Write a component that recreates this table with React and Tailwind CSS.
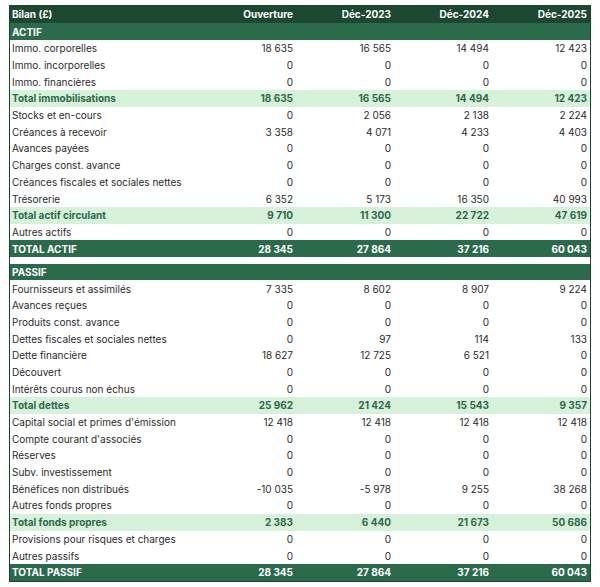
import React from "react";

const Z = ["0", "0", "0", "0"];
const actif = [
  { l: "Immo. corporelles", v: ["18 635", "16 565", "14 494", "12 423"] },
  { l: "Immo. incorporelles", v: Z },
  { l: "Immo. financières", v: Z },
  { l: "Total immobilisations", v: ["18 635", "16 565", "14 494", "12 423"], t: "sub" },
  { l: "Stocks et en-cours", v: ["0", "2 056", "2 138", "2 224"] },
  { l: "Créances à recevoir", v: ["3 358", "4 071", "4 233", "4 403"] },
  { l: "Avances payées", v: Z },
  { l: "Charges const. avance", v: Z },
  { l: "Créances fiscales et sociales nettes", v: Z },
  { l: "Trésorerie", v: ["6 352", "5 173", "16 350", "40 993"] },
  { l: "Total actif circulant", v: ["9 710", "11 300", "22 722", "47 619"], t: "sub" },
  { l: "Autres actifs", v: Z },
  { l: "TOTAL ACTIF", v: ["28 345", "27 864", "37 216", "60 043"], t: "grand" },
];
const passif = [
  { l: "Fournisseurs et assimilés", v: ["7 335", "8 602", "8 907", "9 224"] },
  { l: "Avances reçues", v: Z },
  { l: "Produits const. avance", v: Z },
  { l: "Dettes fiscales et sociales nettes", v: ["0", "97", "114", "133"] },
  { l: "Dette financière", v: ["18 627", "12 725", "6 521", "0"] },
  { l: "Découvert", v: Z },
  { l: "Intérêts courus non échus", v: Z },
  { l: "Total dettes", v: ["25 962", "21 424", "15 543", "9 357"], t: "sub" },
  { l: "Capital social et primes d'émission", v: ["12 418", "12 418", "12 418", "12 418"] },
  { l: "Compte courant d'associés", v: Z },
  { l: "Réserves", v: Z },
  { l: "Subv. investissement", v: Z },
  { l: "Bénéfices non distribués", v: ["-10 035", "-5 978", "9 255", "38 268"] },
  { l: "Autres fonds propres", v: Z },
  { l: "Total fonds propres", v: ["2 383", "6 440", "21 673", "50 686"], t: "sub" },
  { l: "Provisions pour risques et charges", v: Z },
  { l: "Autres passifs", v: Z },
  { l: "TOTAL PASSIF", v: ["28 345", "27 864", "37 216", "60 043"], t: "grand" },
];

function Row({ r }) {
  let cls = "bg-white text-[#2b2b2b]";
  if (r.t === "sub") cls = "bg-[#d8f1da] text-[#2c6a4c] font-bold";
  if (r.t === "grand") cls = "bg-[#2c6a4c] text-white font-bold";
  return (
    <div className={`grid grid-cols-[188px_98px_98px_98px_98px] h-[16.7px] items-center ${cls}`}>
      <div className="pl-[2px] whitespace-nowrap">{r.l}</div>
      {r.v.map((x, i) => (
        <div key={i} className="text-right pr-[3px]">{x}</div>
      ))}
    </div>
  );
}

function Section({ title }) {
  return (
    <div className="h-[16.7px] bg-[#2c6a4c] text-white font-bold flex items-center pl-[2px]">{title}</div>
  );
}

export default function App() {
  return (
    <div className="w-[600px] h-[587px] bg-white" style={{ fontFamily: "Inter, 'Liberation Sans', sans-serif" }}>
      <div className="pt-[5px] pl-[9px]">
        <div className="w-[582px] text-[10px] leading-none border-x border-b border-[#1b4332]">
          <div className="grid grid-cols-[188px_98px_98px_98px_98px] h-[18.3px] items-center bg-[#1c4731] text-white font-bold">
            <div className="pl-[2px]">Bilan (£)</div>
            <div className="text-right pr-[3px]">Ouverture</div>
            <div className="text-right pr-[3px]">Déc-2023</div>
            <div className="text-right pr-[3px]">Déc-2024</div>
            <div className="text-right pr-[3px]">Déc-2025</div>
          </div>
          <Section title="ACTIF" />
          {actif.map((r, i) => <Row key={i} r={r} />)}
          <div className="h-[6.6px] bg-white" />
          <Section title="PASSIF" />
          {passif.map((r, i) => <Row key={i} r={r} />)}
        </div>
      </div>
    </div>
  );
}
